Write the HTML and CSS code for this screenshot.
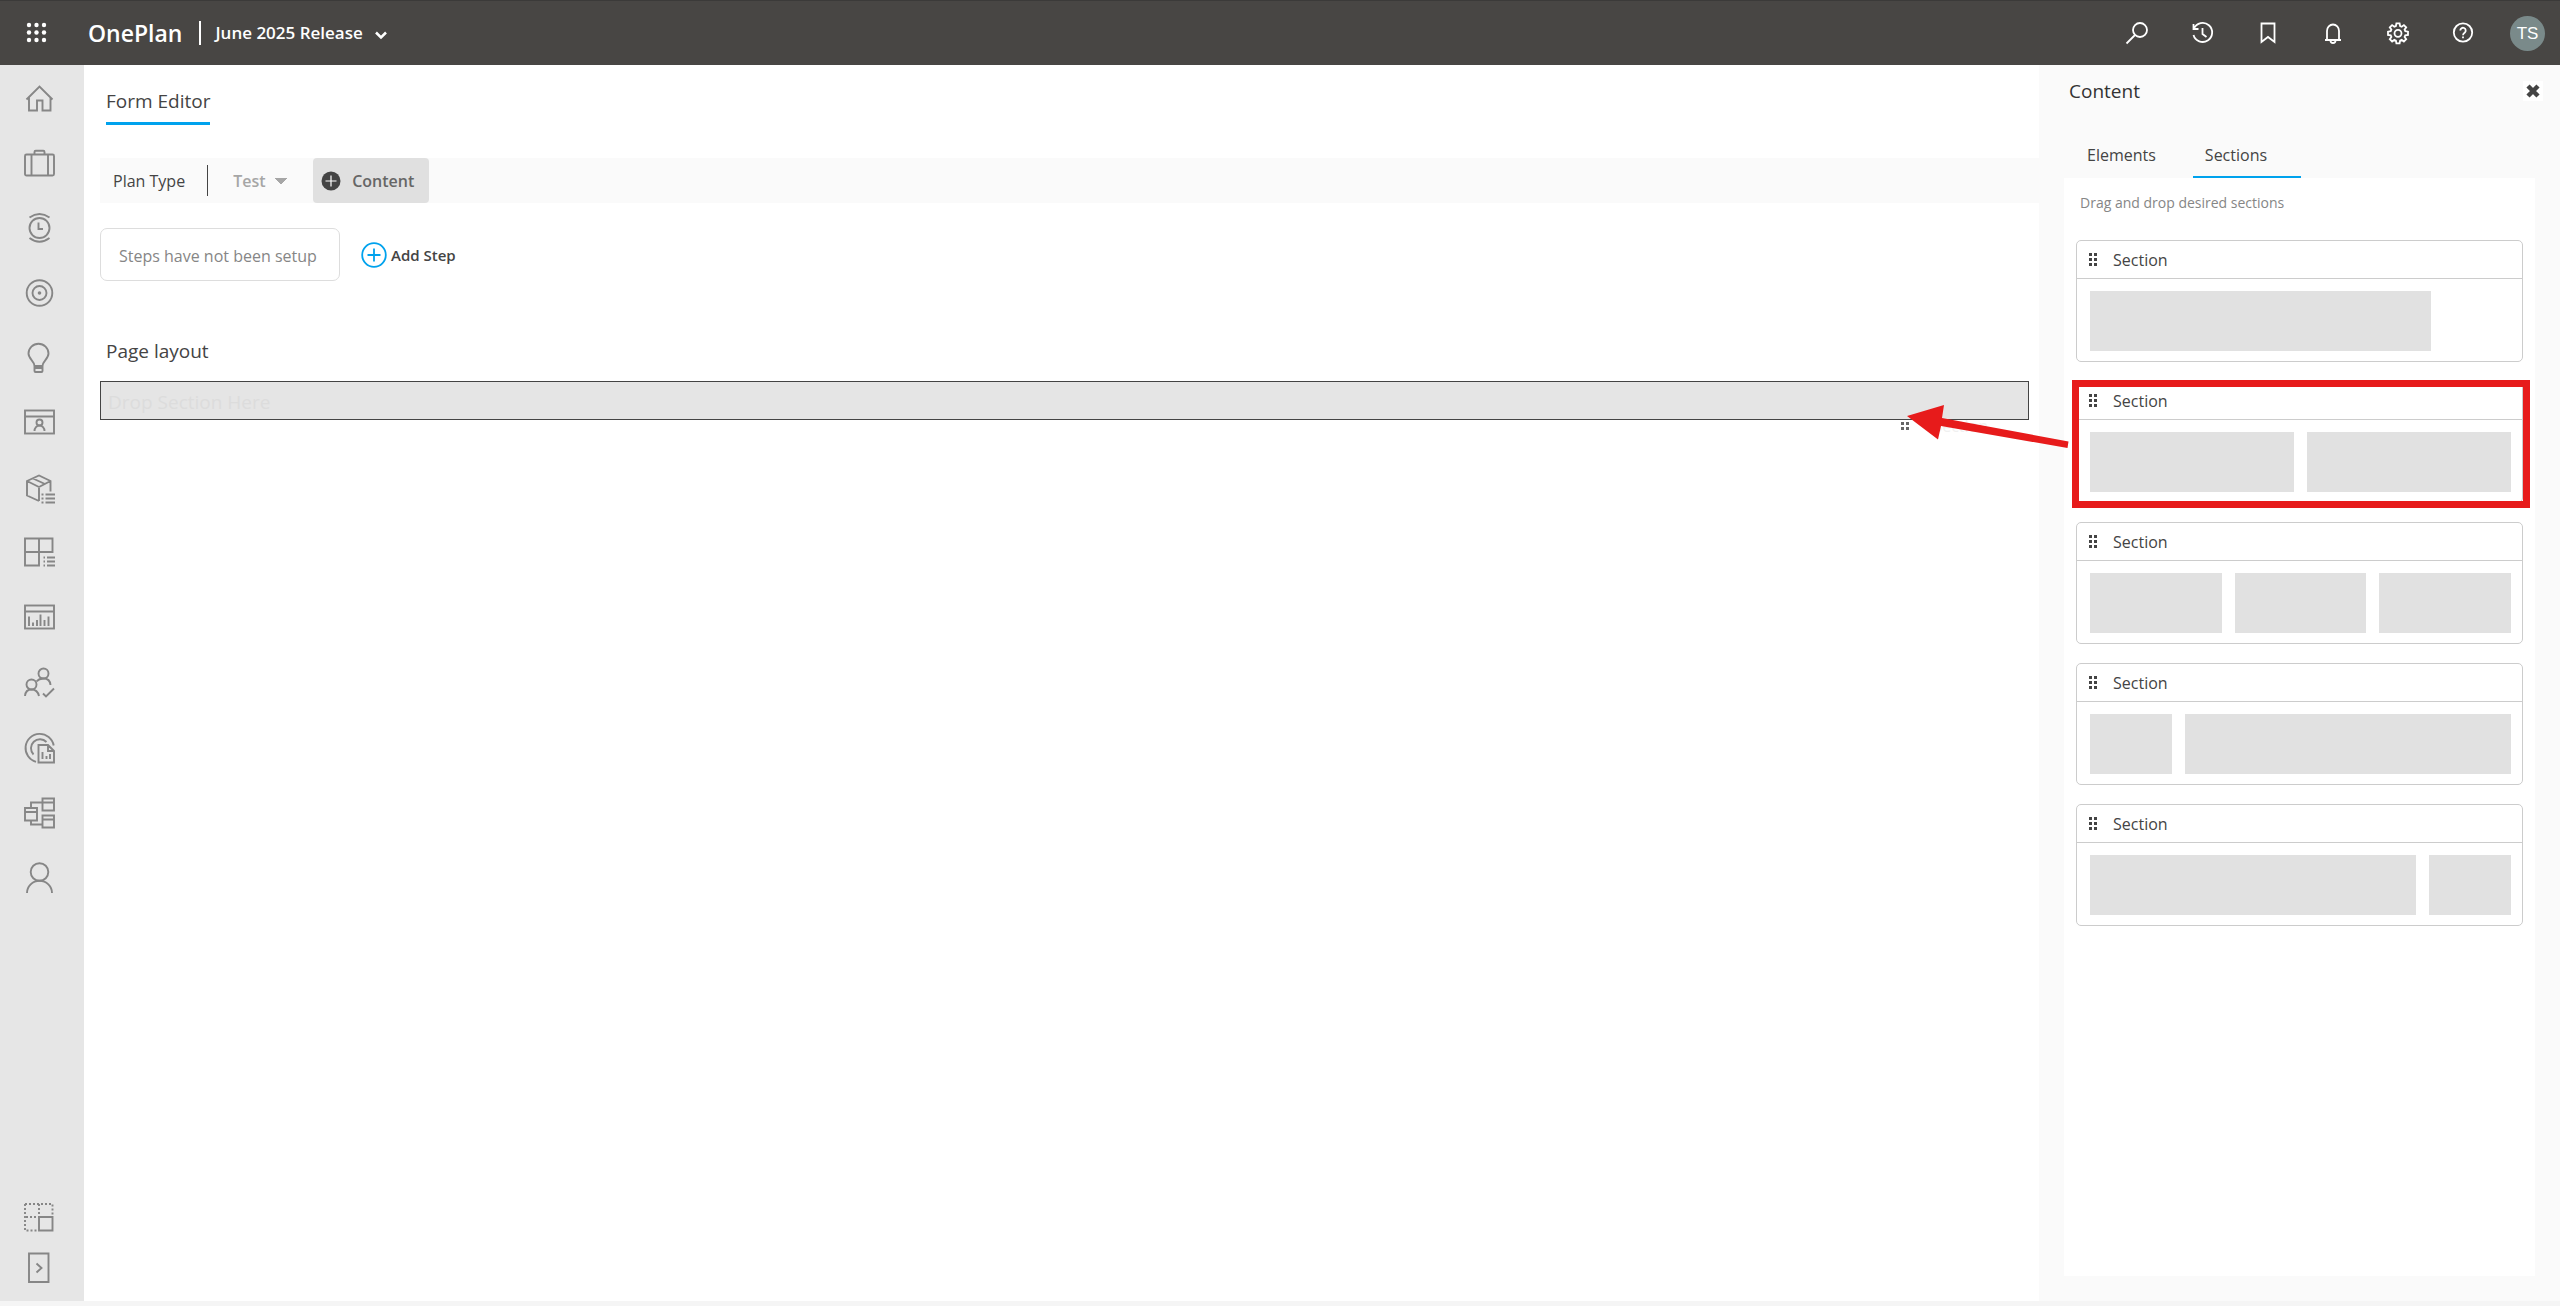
FILE: index.html
```
<!DOCTYPE html>
<html lang="en">
<head>
    <meta charset="UTF-8">
    <meta name="viewport" content="width=device-width, initial-scale=1.0">
    <title>OnePlan - Form Editor</title>
    <link rel="stylesheet" href="styles.css">
</head>
<body>
    <!-- Shared drag handle -->
    <svg class="defs" aria-hidden="true">
        <symbol id="handle" viewBox="0 0 10 14">
            <path d="M0 0h3v3h-3zM5 0h3v3h-3zM0 5h3v3h-3zM5 5h3v3h-3zM0 10h3v3h-3zM5 10h3v3h-3z"/>
        </symbol>
    </svg>

    <header class="topbar">
        <button class="waffle" aria-label="Apps">
            <svg width="22" height="22" viewBox="0 0 22 22" fill="#fff">
                <circle cx="3" cy="3" r="2.200"/><circle cx="10.500" cy="3" r="2.200"/><circle cx="18" cy="3" r="2.200"/>
                <circle cx="3" cy="10.500" r="2.200"/><circle cx="10.500" cy="10.500" r="2.200"/><circle cx="18" cy="10.500" r="2.200"/>
                <circle cx="3" cy="18" r="2.200"/><circle cx="10.500" cy="18" r="2.200"/><circle cx="18" cy="18" r="2.200"/>
            </svg>
        </button>
        <a href="#" class="brand">OnePlan</a>
        <button class="release">
            June 2025 Release
            <svg width="14" height="10" viewBox="0 0 14 10"><path d="M2 2.500L7 7.500L12 2.500"/></svg>
        </button>
        <div class="top-actions">
            <button aria-label="Search">
                <svg width="24" height="24" viewBox="0 0 24 24"><circle cx="14" cy="9" r="7"/><path d="M9 14L0.500 22.500"/></svg>
            </button>
            <button aria-label="History">
                <svg width="24" height="24" viewBox="0 0 24 24"><path d="M3 7.500A9.500 9.500 0 1 1 2.500 14M2.500 3v5h5M11.500 7v6l4 3"/></svg>
            </button>
            <button aria-label="Bookmarks">
                <svg width="24" height="24" viewBox="0 0 24 24"><path d="M5.500 2.500h13v18.500l-6.500-5l-6.500 5z"/></svg>
            </button>
            <button aria-label="Notifications">
                <svg width="24" height="24" viewBox="0 0 24 24"><path d="M4 19h16M6 19V10a6 6.500 0 0 1 12 0V19M9.500 19.500a2.500 2.500 0 0 0 5 0"/></svg>
            </button>
            <button aria-label="Settings">
                <svg width="24" height="24" viewBox="0 0 24 24"><path d="M10.400 2.300h3.200l.5 2.700 1.600.7 2.200-1.600 2.300 2.300-1.600 2.200.7 1.600 2.700.5v3.200l-2.700.5-.7 1.600 1.600 2.200-2.300 2.300-2.200-1.600-1.600.7-.5 2.700h-3.200l-.5-2.700-1.600-.7-2.200 1.600-2.300-2.300 1.600-2.200-.7-1.600-2.700-.5v-3.200l2.700-.5.7-1.600-1.600-2.200 2.300-2.300 2.200 1.600 1.600-.7z"/><circle cx="12" cy="12.300" r="3.500"/></svg>
            </button>
            <button aria-label="Help">
                <svg width="24" height="24" viewBox="0 0 24 24"><circle cx="12" cy="11.500" r="9.200"/><path d="M9.300 9.500a2.700 2.700 0 1 1 4.500 2q-1.800 1.300-1.800 2.700M12 15.500v1.800"/></svg>
            </button>
            <button class="account" aria-label="Account"><span class="avatar">TS</span></button>
        </div>
    </header>

    <div class="workspace">
        <nav class="sidebar">
            <div class="nav-group">
                <a href="#" aria-label="Home"><svg viewBox="0 0 32 32"><path d="M2.500 18.500L15.500 5.500L28.500 18.500M5 16.500V29.500h8V19.500h5.500V29.500h8V16.500"/></svg></a>
                <a href="#" aria-label="Portfolio"><svg viewBox="0 0 32 32"><rect x="1" y="8.500" width="29" height="21" rx="1.500"/><path d="M7.500 8.500v21M24 8.500v21M10.500 8.500V6q0-1.200 1.200-1.200h7.600q1.200 0 1.200 1.200v2.500"/></svg></a>
                <a href="#" aria-label="Timesheets"><svg viewBox="0 0 32 32"><circle cx="15.500" cy="17" r="10"/><path d="M14.500 11.500V18H19M5.500 6.500q10-7 20 0M5.500 27q10 7.500 20 0"/></svg></a>
                <a href="#" aria-label="Goals"><svg viewBox="0 0 32 32"><circle cx="15.500" cy="17" r="12.800"/><circle cx="15.500" cy="17" r="7"/><circle class="solid" cx="15.500" cy="17" r="1.800"/></svg></a>
                <a href="#" aria-label="Ideas"><svg viewBox="0 0 32 32"><path d="M10.500 25V30q0 1 1 1h6q1 0 1-1V25M10.500 25C10.500 20 4.500 18 4.500 12.500A10 9.700 0 0 1 24.500 12.500C24.500 18 18.500 20 18.500 25zM10.500 27h8"/></svg></a>
                <a href="#" aria-label="Resources"><svg viewBox="0 0 32 32"><rect x="1" y="4.500" width="29" height="23"/><path d="M1 10.500h29M10.500 25a5 5.500 0 0 1 10 0"/><circle cx="15.500" cy="16.500" r="3"/></svg></a>
                <a href="#" aria-label="Products"><svg viewBox="0 0 32 32"><path d="M15 30L3 24.500V10L15 4.500L26.500 10V20.500M3 10L15 16L26.500 10M15 16V30M9 7.500L21 13M17.500 23.500h2M21.500 23.500h9.500M17.500 27.500h2M21.500 27.500h9.500M17.500 31.500h2M21.500 31.500h9.500"/></svg></a>
                <a href="#" aria-label="Boards"><svg viewBox="0 0 32 32"><path d="M1 2.500H28.500V16H1zM15 2.500V29.500H1V16M19.500 21.500h1.500M23 21.500h8M19.500 25.500h1.500M23 25.500h8M19.500 29.500h1.500M23 29.500h8"/></svg></a>
                <a href="#" aria-label="Reports"><svg viewBox="0 0 32 32"><rect x="1" y="4.500" width="29" height="23"/><path d="M1 10.500h29M5 15.500V25M9 21.500V25M13 19V25M16.500 13.500V25M20.500 19V25M24.500 15.500V25"/></svg></a>
                <a href="#" aria-label="Approvals"><svg viewBox="0 0 32 32"><circle cx="19.500" cy="7.500" r="5"/><circle cx="7.500" cy="18.500" r="5"/><path d="M12.500 15.500Q15 12.500 19.500 12.500Q26 12.500 26.500 19M1 30Q1.500 23.500 7.500 23.500T15 30M19 27.500L22 30.500L30 22.500"/></svg></a>
                <a href="#" aria-label="Insights"><svg viewBox="0 0 32 32"><path d="M29.700 14.500A14.200 14.200 0 1 0 12 30.800M22.500 11A8.800 8.800 0 1 0 9.500 23.500M14.500 14H24L30 20V31.500H14.500zM24 14V20H30M18.500 21V28M22.500 25V28M26 23V28"/></svg></a>
                <a href="#" aria-label="Workflows"><svg viewBox="0 0 32 32"><path d="M18.500 2.500H30V14.500H18.500zM18.500 6.500H30M1 12H13V24.500H1zM1 16H13M18.500 19.500H30V31.500H18.500zM18.500 23.500H30M7 12V6.500H18.500M7 24.500V28.500H18.500"/></svg></a>
                <a href="#" aria-label="Profile"><svg viewBox="0 0 32 32"><circle cx="15.500" cy="11" r="8.800"/><path d="M3 32A12.500 12.200 0 0 1 28 32"/></svg></a>
            </div>
            <div class="nav-group nav-bottom">
                <a href="#" aria-label="Layout"><svg viewBox="0 0 32 32"><path class="dotted" d="M1 3H28.500V15M1 3V29.500H14M15 3V16H1"/><path d="M15 16H28.500V29.500H15z"/></svg></a>
                <button aria-label="Expand menu"><svg viewBox="0 0 32 32"><path d="M5 1.500H24.500V30H5zM12.500 11.500L17.500 16L12.500 20.500"/></svg></button>
            </div>
        </nav>

        <main class="editor">
            <h1><span>Form Editor</span></h1>
            <div class="toolbar">
                <label for="plan-type">Plan Type</label>
                <select id="plan-type"><option>Test</option></select>
                <button class="content-btn">
                    <svg width="20" height="20" viewBox="0 0 20 20"><circle cx="10" cy="10" r="9.500" fill="#444"/><path d="M10 4.500v11M4.500 10h11" stroke="#fff" stroke-width="1.200"/></svg>
                    Content
                </button>
            </div>
            <div class="steps">
                <div class="steps-empty">Steps have not been setup</div>
                <button class="add-step">
                    <svg width="26" height="26" viewBox="0 0 26 26"><circle cx="13" cy="13" r="11.800"/><path d="M13 6.500v13M6.500 13h13"/></svg>
                    Add Step
                </button>
            </div>
            <h2>Page layout</h2>
            <div class="drop-zone">
                Drop Section Here
                <div class="drag-ghost">
                    <svg width="8" height="8" viewBox="0 0 8 8"><path d="M0 0h3v3h-3zM5 0h3v3h-3zM0 5h3v3h-3zM5 5h3v3h-3z"/></svg>
                    <span>Section</span>
                </div>
            </div>
        </main>

        <aside class="panel">
            <div class="panel-head">
                <h2>Content</h2>
                <button class="close-btn" aria-label="Close">
                    <svg width="16" height="16" viewBox="0 0 16 16"><path d="M3 3L13 13M13 3L3 13"/></svg>
                </button>
            </div>
            <div class="tabs">
                <button>Elements</button>
                <button class="active">Sections</button>
            </div>
            <div class="panel-body">
                <p>Drag and drop desired sections</p>
                <div class="card">
                    <h3><svg width="10" height="14"><use href="#handle"/></svg>Section</h3>
                    <div class="columns single"><span></span></div>
                </div>
                <div class="card highlighted">
                    <h3><svg width="10" height="14"><use href="#handle"/></svg>Section</h3>
                    <div class="columns halves"><span></span><span></span></div>
                    <!-- Arrow to the drop zone -->
                    <svg class="arrow" width="176" height="56" viewBox="0 0 176 56" fill="#e71b1b"><path d="M7 16L44 5L42 18L168.500 41.500L167.500 48L41 26L38 39.500z"/></svg>
                </div>
                <div class="card">
                    <h3><svg width="10" height="14"><use href="#handle"/></svg>Section</h3>
                    <div class="columns thirds"><span></span><span></span><span></span></div>
                </div>
                <div class="card">
                    <h3><svg width="10" height="14"><use href="#handle"/></svg>Section</h3>
                    <div class="columns wide-right"><span></span><span></span></div>
                </div>
                <div class="card">
                    <h3><svg width="10" height="14"><use href="#handle"/></svg>Section</h3>
                    <div class="columns wide-left"><span></span><span></span></div>
                </div>
            </div>
        </aside>
    </div>
</body>
</html>
```
FILE: styles.css
```
* {
    box-sizing: border-box;
}
body {
    margin: 0;
    height: 100vh;
    display: flex;
    flex-direction: column;
    font-family: "Open Sans", "Noto Sans", sans-serif;
    font-size: 16px;
    line-height: 24px;
    color: #444;
    background: #fff;
    border-bottom: 5px solid #f5f5f5;
}
h1, h2, h3, p {
    margin: 0;
    font-weight: normal;
}
button, select {
    font: inherit;
    color: inherit;
    border: none;
    background: none;
    padding: 0;
    cursor: pointer;
}
a {
    color: inherit;
    text-decoration: none;
}
svg {
    display: block;
    flex: none;
}
.defs {
    position: absolute;
    width: 0;
    height: 0;
}

/* Top bar */
.topbar {
    height: 65px;
    flex: none;
    display: flex;
    align-items: center;
    background: #484644;
    border-top: 1px solid #3b3a39;
    color: #fff;
}
.waffle {
    width: 88px;
    padding-left: 26px;
}
.brand {
    font-size: 23px;
    font-weight: 600;
    padding-right: 17px;
    border-right: 2px solid #fff;
}
.release {
    display: flex;
    align-items: center;
    gap: 11px;
    padding-left: 14px;
    font-size: 17px;
    font-weight: 600;
}
.release svg {
    margin-top: 4px;
    fill: none;
    stroke: #fff;
    stroke-width: 2.5;
}
.top-actions {
    margin-left: auto;
    display: flex;
}
.top-actions button {
    width: 65px;
    height: 64px;
    display: flex;
    align-items: center;
    justify-content: center;
}
.top-actions svg {
    fill: none;
    stroke: #fff;
    stroke-width: 1.8;
    overflow: visible;
}
.avatar {
    width: 35px;
    height: 35px;
    border-radius: 50%;
    background: #7a8a8a;
    font-family: "Liberation Sans", Arial, sans-serif;
    font-size: 17px;
    line-height: 36px;
    text-align: center;
}

/* Left navigation */
.workspace {
    flex: 1;
    display: flex;
    min-height: 0;
}
.sidebar {
    width: 84px;
    flex: none;
    display: flex;
    flex-direction: column;
    justify-content: space-between;
    background: #e6e6e6;
}
.nav-group {
    display: flex;
    flex-direction: column;
    gap: 33px;
    padding: 16px 0 17px 24px;
}
.nav-bottom {
    gap: 19px;
}
.sidebar svg {
    width: 32px;
    height: 32px;
    overflow: visible;
    fill: none;
    stroke: #868686;
    stroke-width: 1.9;
}
.sidebar .solid {
    fill: #868686;
    stroke: none;
}
.sidebar .dotted {
    stroke-dasharray: 2 2;
}

/* Editor */
.editor {
    flex: 1;
    min-width: 0;
    padding: 22px 0 0 16px;
}
h1 {
    font-size: 19px;
    line-height: 28px;
    padding: 0 6px 33px;
}
h1 span {
    display: inline-block;
    padding-bottom: 7px;
    border-bottom: 3px solid #00a2ed;
}
.toolbar {
    display: flex;
    align-items: center;
    height: 45px;
    background: #fafafa;
    padding-left: 13px;
}
.toolbar label {
    padding: 4px 22px 3px 0;
    border-right: 1px solid #444;
}
.toolbar select {
    appearance: none;
    width: 55px;
    margin: 0 25px;
    color: #a6a6a6;
    font-weight: 600;
    background: linear-gradient(to bottom left, #a6a6a6 50%, transparent 50%) right 7px top 9px / 6px 7px no-repeat,
        linear-gradient(to bottom right, #a6a6a6 50%, transparent 50%) right 1px top 9px / 6px 7px no-repeat;
}
.content-btn {
    display: flex;
    align-items: center;
    gap: 11px;
    height: 45px;
    padding: 0 15px 0 8px;
    border-radius: 4px;
    background: #e0e0e0;
    color: #666;
    font-weight: 600;
}
.steps {
    display: flex;
    align-items: center;
    gap: 21px;
    margin: 25px 0 56px;
}
.steps-empty {
    min-width: 240px;
    padding: 15px 16px 12px 18px;
    border: 1px solid #ddd;
    border-radius: 7px;
    color: #868686;
}
.add-step {
    display: flex;
    align-items: center;
    gap: 4px;
    font-size: 15px;
    font-weight: 600;
}
.add-step svg {
    fill: none;
    stroke: #00a2ed;
    stroke-width: 1.8;
}
.editor h2 {
    font-size: 19px;
    line-height: 28px;
    padding: 0 6px 16px;
}
.drop-zone {
    position: relative;
    margin-right: 10px;
    padding: 6px 7px 3px;
    border: 1px solid #444;
    background: #e5e5e5;
    color: #dcdcdc;
    font-size: 19px;
    line-height: 28px;
}
/* Section being dragged under the pointer */
.drag-ghost {
    position: absolute;
    top: 32px;
    right: 40px;
    display: flex;
    align-items: center;
    gap: 24px;
    color: #f0f0f0;
    font-size: 16px;
    line-height: 24px;
}
.drag-ghost svg {
    fill: #666;
}

/* Content panel */
.panel {
    width: 521px;
    flex: none;
    display: flex;
    flex-direction: column;
    background: #fafafa;
    padding: 12px 25px 25px;
}
.panel-head {
    display: flex;
    align-items: center;
    justify-content: space-between;
    margin-right: -8px;
    padding-left: 5px;
    color: #333;
}
.panel-head h2 {
    font-size: 19px;
    line-height: 28px;
}
.close-btn {
    padding: 2px;
    background: #fff;
}
.close-btn path {
    stroke: #444;
    stroke-width: 4.5;
}
.tabs {
    display: flex;
    gap: 14px;
    padding: 27px 0 0;
}
.tabs button {
    height: 46px;
    padding: 2px 23px 0;
    border-bottom: 2px solid transparent;
}
.tabs .active {
    width: 108px;
    padding: 2px 12px 0;
    text-align: left;
    border-color: #00a2ed;
}
.panel-body {
    flex: 1;
    padding: 13px 12px 0;
    background: #fff;
}
.panel-body p {
    padding: 0 4px 25px;
    font-size: 14px;
    color: #868686;
}
.card {
    position: relative;
    margin-bottom: 19px;
    border: 1px solid #ccc;
    border-radius: 5px;
}
.card h3 {
    display: flex;
    align-items: center;
    gap: 14px;
    padding: 7px 12px 6px;
    border-bottom: 1px solid #ccc;
    font-size: 16px;
}
.card h3 svg {
    fill: #444;
}
.columns {
    display: grid;
    gap: 13px;
    padding: 12px 11px 10px 13px;
}
.columns span {
    height: 60px;
    background: #e1e1e1;
}
.single {
    grid-template-columns: 81%;
}
.halves {
    grid-template-columns: 1fr 1fr;
}
.thirds {
    grid-template-columns: 1fr 1fr 1fr;
}
.wide-right {
    grid-template-columns: 1fr 4fr;
}
.wide-left {
    grid-template-columns: 4fr 1fr;
}
.highlighted::after {
    content: "";
    position: absolute;
    inset: -2px -8px -6px -5px;
    border: 7px solid #e71b1b;
}
.arrow {
    position: absolute;
    left: -177px;
    top: 18px;
}
```
